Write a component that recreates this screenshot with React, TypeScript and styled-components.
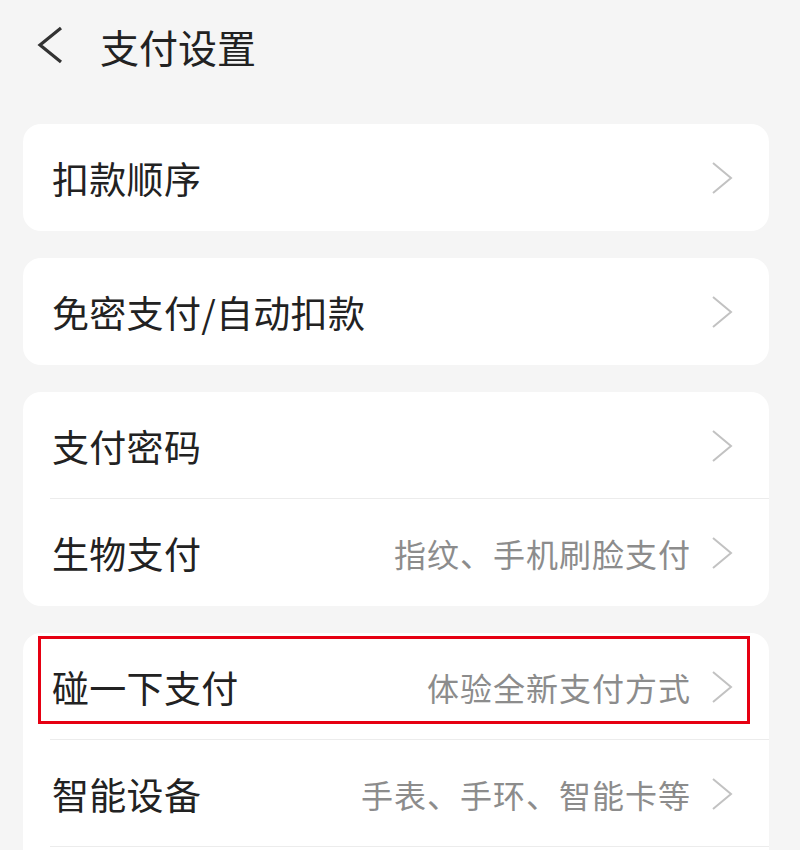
import React from "react";
import styled, { createGlobalStyle } from "styled-components";

const GlobalStyle = createGlobalStyle`
  html, body {
    margin: 0;
    padding: 0;
    background: #f5f5f5;
    font-family: "Noto Sans CJK SC", "Noto Sans", sans-serif;
  }
`;

const Page = styled.div`
  width: 800px;
  height: 850px;
  overflow: hidden;
  background: #f5f5f5;
`;

const Header = styled.div`
  height: 124px;
  display: flex;
  align-items: flex-start;
  padding: 26px 0 0 36px;
  box-sizing: border-box;
  gap: 36px;
`;

const Title = styled.div`
  font-size: 39px;
  line-height: 40px;
  color: #222;
`;

const List = styled.div`
  display: flex;
  flex-direction: column;
  gap: 27px;
  margin: 0 31px 0 23px;
`;

const Card = styled.div`
  background: #fff;
  border-radius: 18px;
  overflow: hidden;
`;

const Row = styled.div<{ $divider?: boolean }>`
  position: relative;
  height: 107px;
  display: flex;
  align-items: center;
  padding: 0 36px 0 29px;
  box-sizing: border-box;
  &::after {
    content: "";
    display: ${(p) => (p.$divider ? "block" : "none")};
    position: absolute;
    left: 27px;
    right: 0;
    bottom: 0;
    height: 1px;
    background: #ececec;
  }
`;

const Label = styled.div`
  flex: 1;
  font-size: 37px;
  color: #222;
  letter-spacing: 0.3px;
`;

const Hint = styled.div`
  font-size: 32px;
  color: #8c8c8c;
  margin-right: 20px;
  letter-spacing: 1px;
`;

const Highlight = styled.div`
  position: absolute;
  left: 15px;
  top: 3px;
  width: 712px;
  height: 88px;
  border: 3px solid #e60012;
  box-sizing: border-box;
`;

const Chevron = () => (
  <svg width="22" height="34" viewBox="0 0 22 34">
    <polyline points="2,2 20,17 2,32" fill="none" stroke="#c2c2c2" strokeWidth="2" />
  </svg>
);

const Back = () => (
  <svg width="28" height="38" viewBox="0 0 28 38">
    <polyline points="25,2 4,19 25,36" fill="none" stroke="#333" strokeWidth="3.2" />
  </svg>
);

type Item = { label: string; hint?: string; highlight?: boolean };

const groups: Item[][] = [
  [{ label: "扣款顺序" }],
  [{ label: "免密支付/自动扣款" }],
  [{ label: "支付密码" }, { label: "生物支付", hint: "指纹、手机刷脸支付" }],
  [
    { label: "碰一下支付", hint: "体验全新支付方式", highlight: true },
    { label: "智能设备", hint: "手表、手环、智能卡等" },
  ],
];

export default function App() {
  return (
    <Page>
      <GlobalStyle />
      <Header>
        <Back />
        <Title>支付设置</Title>
      </Header>
      <List>
        {groups.map((g, gi) => (
          <Card key={gi}>
            {g.map((it, i) => (
              <Row key={i} $divider={i < g.length - 1 || gi === groups.length - 1}>
                <Label>{it.label}</Label>
                {it.hint && <Hint>{it.hint}</Hint>}
                <Chevron />
                {it.highlight && <Highlight />}
              </Row>
            ))}
            {gi === groups.length - 1 && <Row />}
          </Card>
        ))}
      </List>
    </Page>
  );
}
